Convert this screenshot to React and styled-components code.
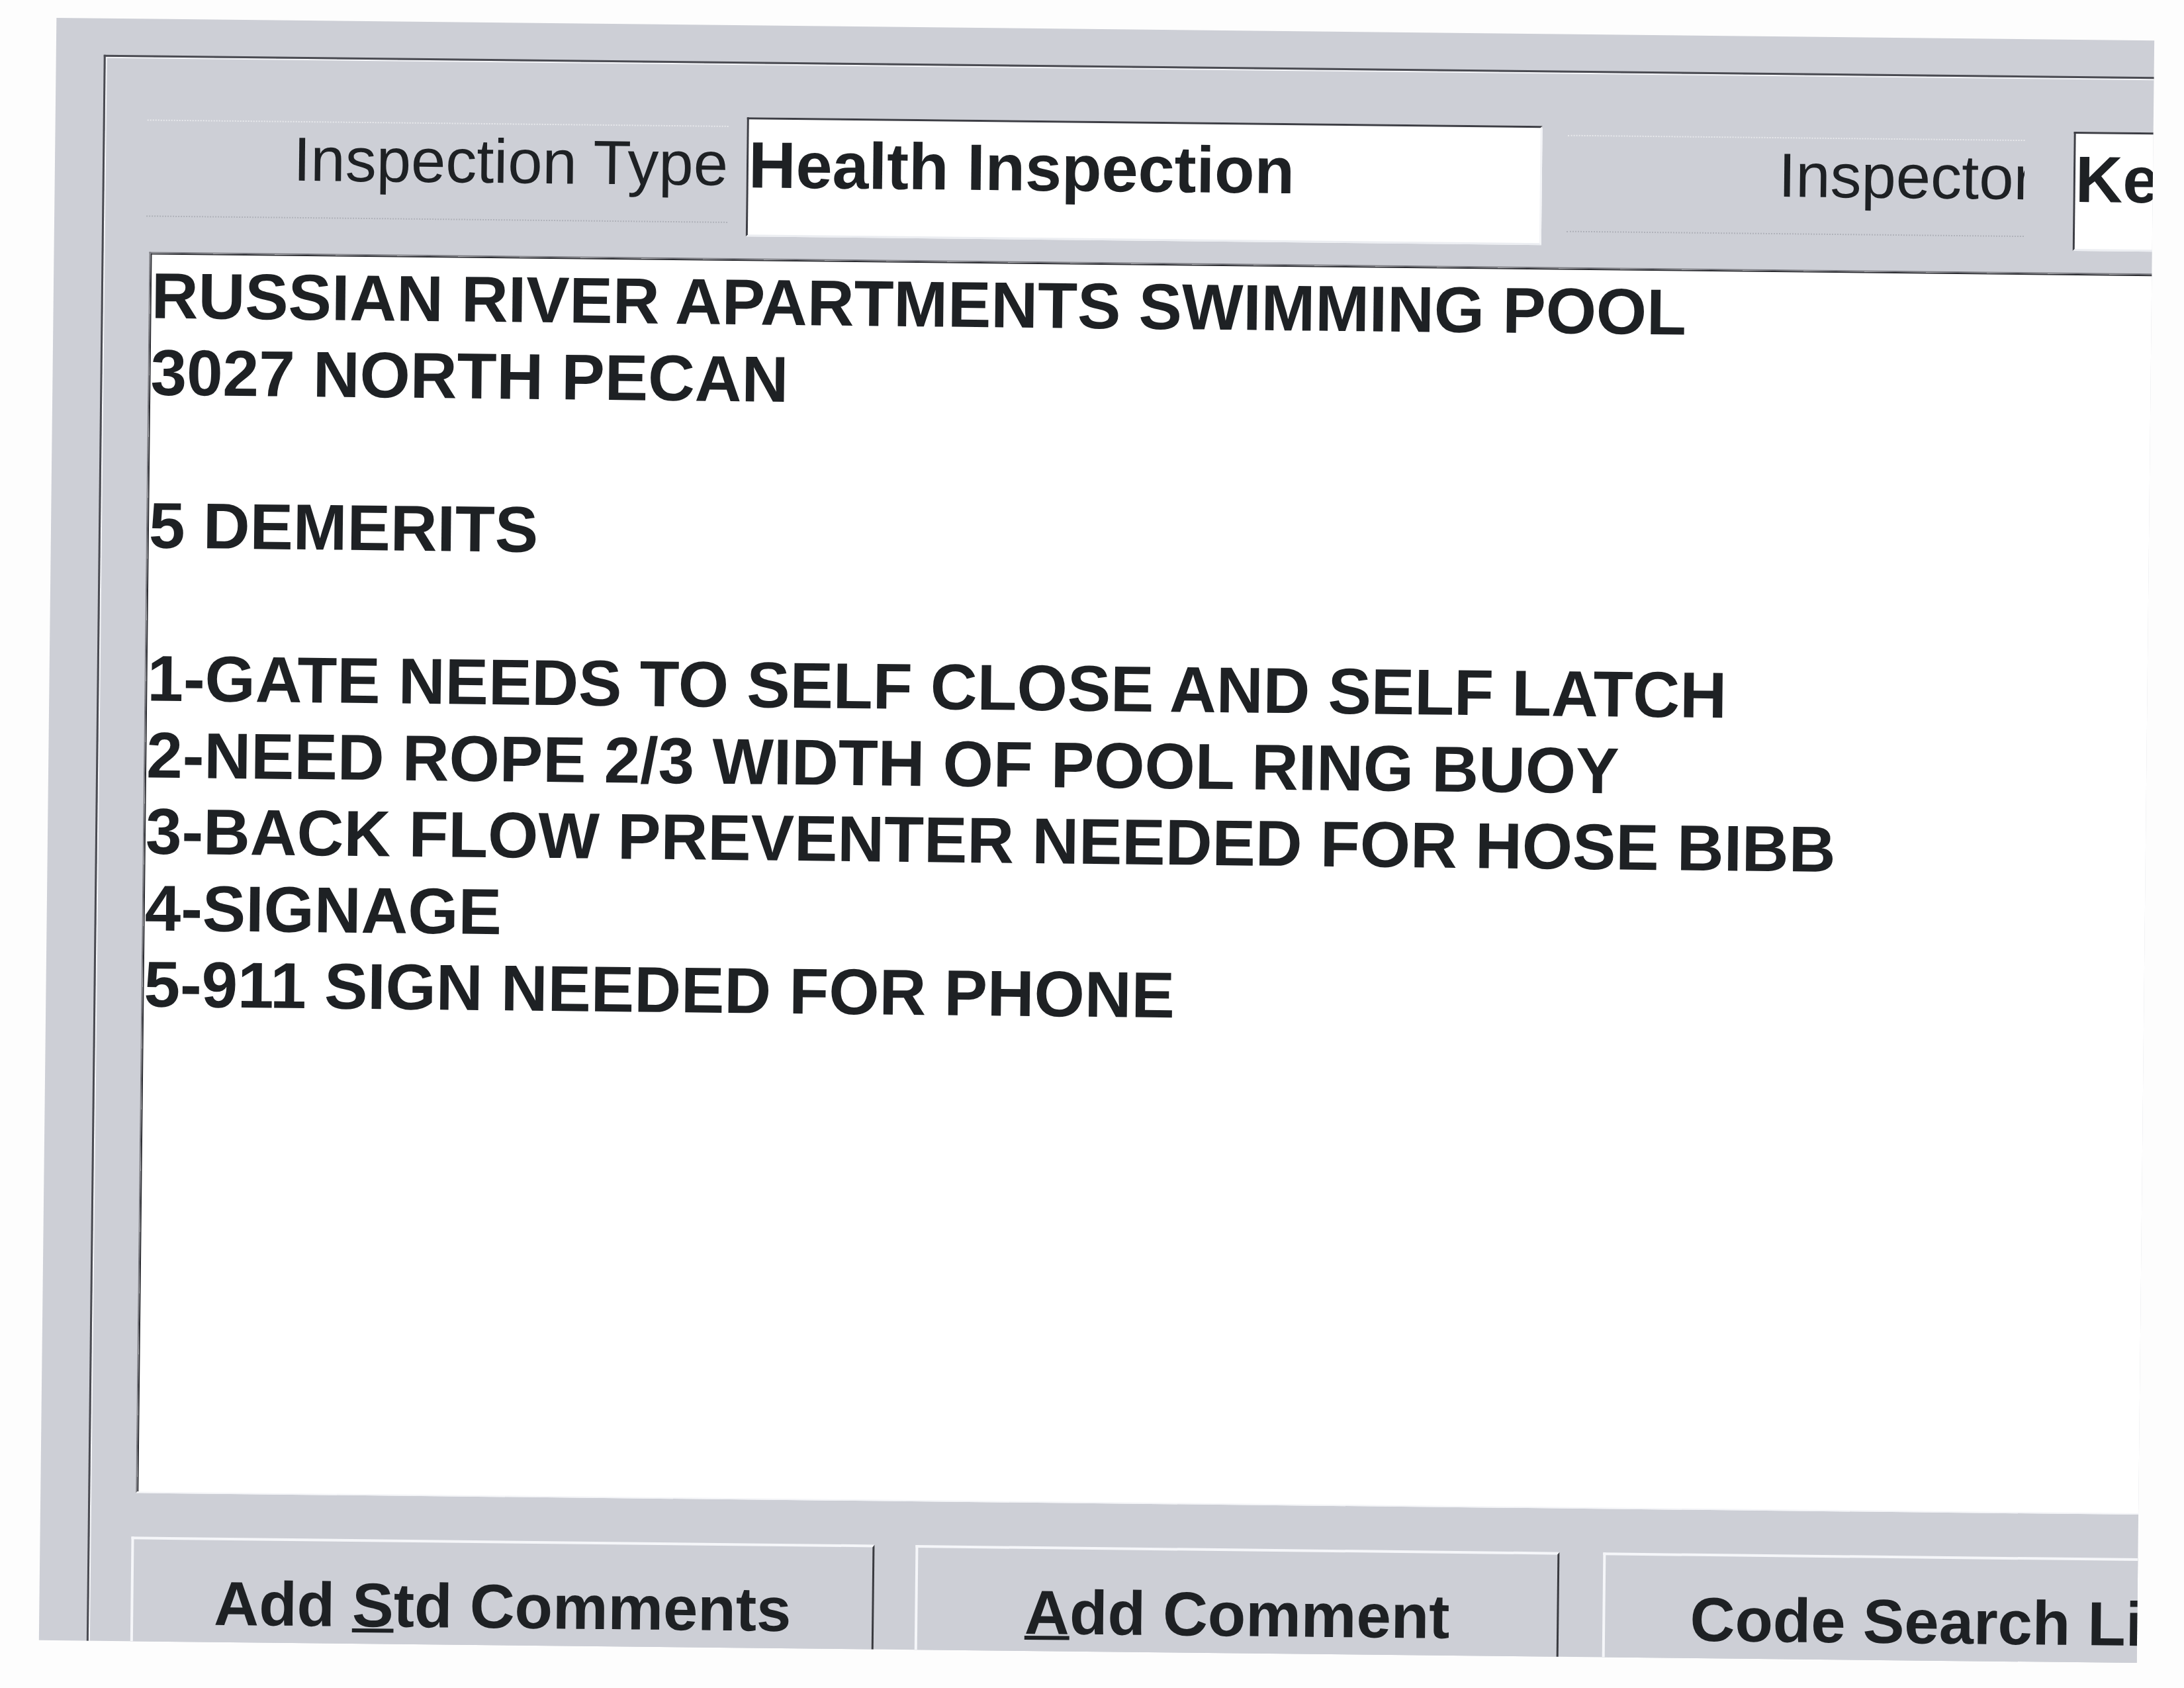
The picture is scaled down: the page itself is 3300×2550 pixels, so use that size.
import React from "react";
import styled, { createGlobalStyle } from "styled-components";

const GlobalStyle = createGlobalStyle`
  html, body {
    margin: 0;
    padding: 0;
    background: #fdfdfd;
  }
  body {
    font-family: "Liberation Sans", Arial, sans-serif;
  }
`;

const Page = styled.div`
  width: 3300px;
  height: 2550px;
  box-sizing: border-box;
  padding: 44px 0 0 72px;
  overflow: hidden;
  background: #fdfdfd;
`;

/* the scanned window sits a little crooked on the paper */
const Window = styled.div`
  width: 3170px;
  height: 2451px;
  background: #cdcfd6;
  color: #1e2124;
  overflow: hidden;
  transform: rotate(0.62deg);
`;

const Frame = styled.div`
  margin: 55px 0 0 72px;
  width: 3300px;
  height: 2600px;
  border-top: 3px solid #4a4b52;
  border-left: 3px solid #4a4b52;
  box-shadow: inset 2px 2px 0 #f6f7fa;
  display: flex;
  flex-direction: column;
`;

const HeaderRow = styled.div`
  display: flex;
  align-items: flex-start;
  height: 180px;
  margin-top: 81px;
  padding-left: 64px;
`;

const FieldLabel = styled.div`
  flex: none;
  width: ${(p) => p.$width}px;
  height: 147px;
  margin-top: 13px;
  margin-left: ${(p) => p.$gap || 0}px;
  box-sizing: border-box;
  padding-top: 2px;
  border-top: 2px dotted rgba(255, 255, 255, 0.55);
  border-bottom: 2px dotted rgba(120, 122, 130, 0.35);
  font-size: 94px;
  text-align: right;
  white-space: nowrap;
  overflow: hidden;
`;

const LabelText = styled.span`
  display: inline-block;
  margin-right: ${(p) => -(p.$overhang || 0)}px;
`;

const TextBox = styled.div`
  flex: none;
  width: ${(p) => p.$width}px;
  height: 180px;
  margin-left: ${(p) => p.$gap || 0}px;
  box-sizing: border-box;
  padding: 19px 0 0 0;
  background: #fff;
  border-style: solid;
  border-width: 3px;
  border-color: #3d3e45 #f3f4f7 #eceef2 #3d3e45;
  font-size: 99px;
  font-weight: bold;
  line-height: 1;
  white-space: nowrap;
  overflow: hidden;
`;

const CommentBox = styled.div`
  flex: none;
  width: 3200px;
  height: 1875px;
  margin: 33px 0 0 69px;
  box-sizing: border-box;
  padding: 7px 0 0 2px;
  background: #fff;
  border-style: solid;
  border-width: 2px;
  border-color: #77787f #ffffff #f4f5f8 #77787f;
  box-shadow: inset 2px 2px 0 #2b2c31;
  font-size: 98px;
  font-weight: bold;
  line-height: 115.6px;
`;

const CommentLine = styled.div`
  height: 115.6px;
  white-space: pre;
`;

const ButtonRow = styled.div`
  display: flex;
  align-items: flex-start;
  margin: 66px 0 0 63px;
`;

const ActionButton = styled.button`
  flex: none;
  display: flex;
  align-items: flex-start;
  justify-content: center;
  width: ${(p) => p.$width}px;
  height: 220px;
  margin: 0 0 0 ${(p) => p.$gap || 0}px;
  box-sizing: border-box;
  padding: 42px 0 0;
  background: #cdcfd6;
  border-style: solid;
  border-width: 4px 3px 3px 4px;
  border-color: #f5f6f9 #3a3b40 #3a3b40 #f5f6f9;
  border-radius: 0;
  font-family: inherit;
  font-size: 94px;
  font-weight: bold;
  line-height: normal;
  color: #1e2124;
  white-space: nowrap;
  overflow: hidden;
`;

const AccessKey = styled.span`
  text-decoration: underline;
  text-decoration-thickness: 6px;
  text-underline-offset: 3px;
`;

const lines = [
  "RUSSIAN RIVER APARTMENTS SWIMMING POOL",
  "3027 NORTH PECAN",
  "",
  "5 DEMERITS",
  "",
  "1-GATE NEEDS TO SELF CLOSE AND SELF LATCH",
  "2-NEED ROPE 2/3 WIDTH OF POOL RING BUOY",
  "3-BACK FLOW PREVENTER NEEDED FOR HOSE BIBB",
  "4-SIGNAGE",
  "5-911 SIGN NEEDED FOR PHONE",
];

export default function App() {
  return (
    <>
      <GlobalStyle />
      <Page>
        <Window>
          <Frame>
            <HeaderRow>
              <FieldLabel $width={878}>
                <LabelText>Inspection Type</LabelText>
              </FieldLabel>
              <TextBox $width={1202} $gap={28}>
                Health Inspection
              </TextBox>
              <FieldLabel $width={691} $gap={38}>
                <LabelText $overhang={15}>Inspector</LabelText>
              </FieldLabel>
              <TextBox $width={600} $gap={74}>
                Ke
              </TextBox>
            </HeaderRow>

            <CommentBox>
              {lines.map((line, i) => (
                <CommentLine key={i}>{line || "\u00a0"}</CommentLine>
              ))}
            </CommentBox>

            <ButtonRow>
              <ActionButton $width={1123}>
                Add&nbsp;<AccessKey>S</AccessKey>td Comments
              </ActionButton>
              <ActionButton $width={973} $gap={62}>
                <AccessKey>A</AccessKey>dd Comment
              </ActionButton>
              <ActionButton $width={948} $gap={66}>
                Code Search Li
              </ActionButton>
            </ButtonRow>
          </Frame>
        </Window>
      </Page>
    </>
  );
}
